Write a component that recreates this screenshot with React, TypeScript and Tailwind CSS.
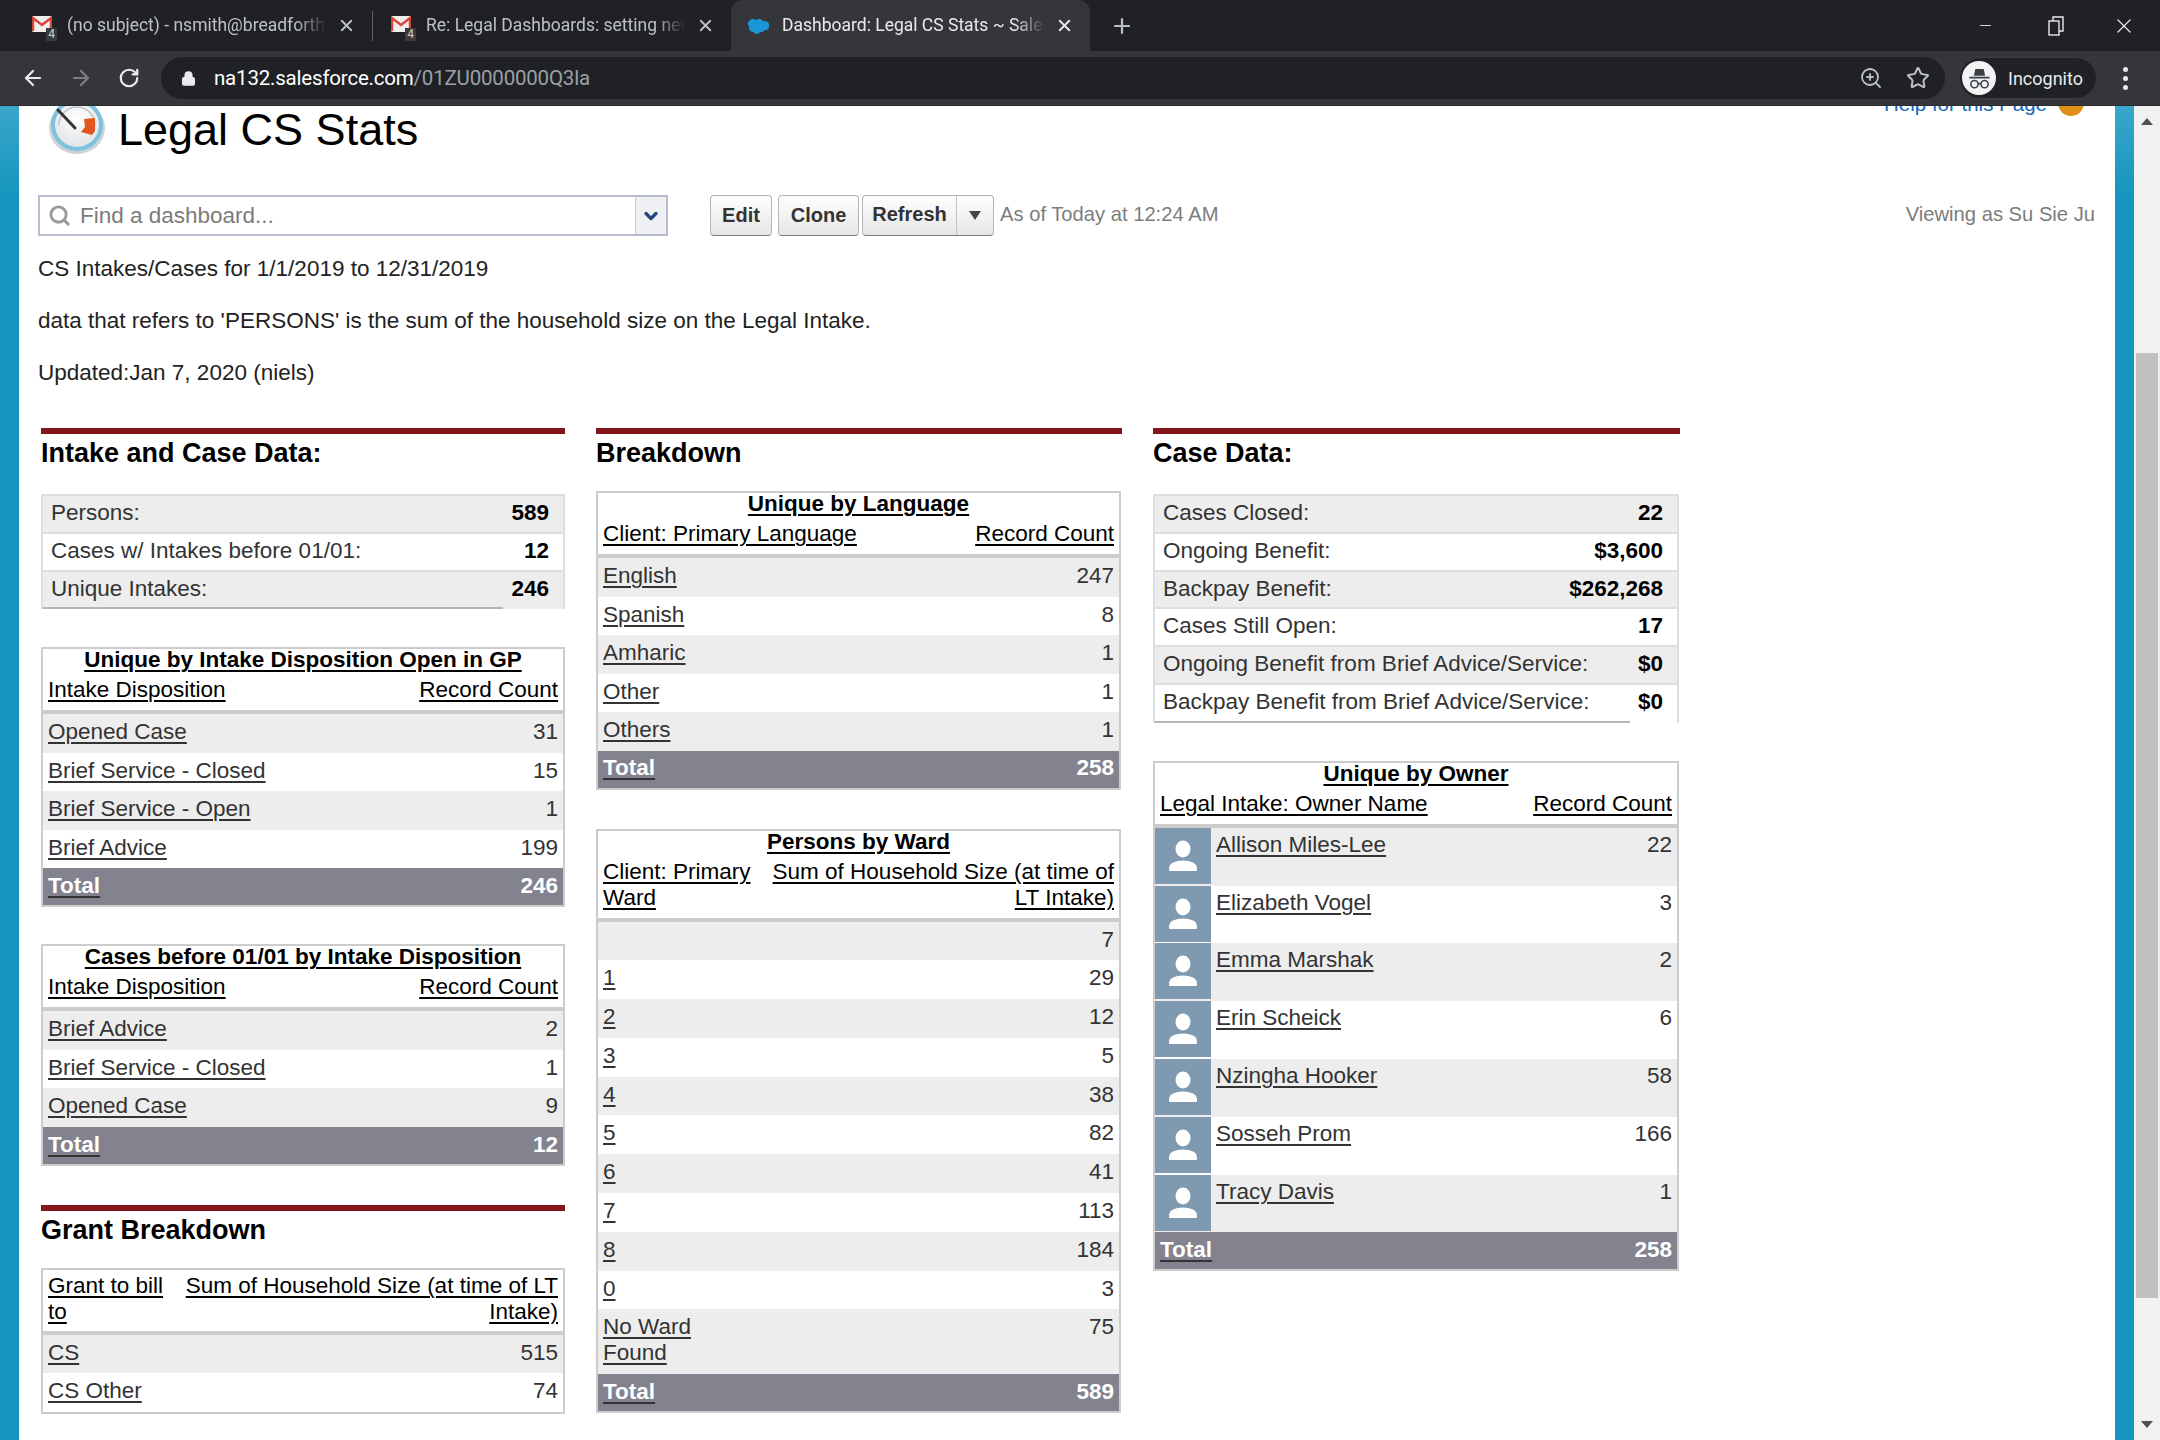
import { ArrowLeft, ArrowRight, RotateCw, Lock, ZoomIn, Star, X, Plus, Minus, Search, ChevronDown } from 'lucide-react'

type Row = { label: string; value: string; tall?: boolean }

const linkClass = 'underline decoration-2 underline-offset-[3px]'

function GmailIcon() {
  return (
    <span className="relative block w-[20px] h-[20px]">
      <svg viewBox="0 0 20 16" className="w-[20px] h-[16px]">
        <rect x="0" y="0" width="20" height="16" rx="1.5" fill="#f1efeb" />
        <path d="M1 15V2l9 7 9-7v13" fill="none" stroke="#d8443a" strokeWidth="2.4" />
      </svg>
      <span className="absolute -right-[5px] bottom-[-5px] w-[11px] h-[13px] bg-[#3b3b3b] text-[#cfcfcf] text-[12px] leading-[13px] text-center font-['Roboto',sans-serif]">4</span>
    </span>
  )
}

function CloudIcon() {
  return (
    <svg viewBox="0 0 22 18" className="w-[22px] h-[18px]">
      <path
        d="M9 3.2A4.3 4.3 0 0 1 12.2 2a4.4 4.4 0 0 1 3.9 2.3 5 5 0 0 1 2-.4 4.2 4.2 0 0 1 3.9 5 4 4 0 0 1-4.6 4.4 3.3 3.3 0 0 1-4.2 1.4 3.9 3.9 0 0 1-7 .1 3.5 3.5 0 0 1-3.7-5A3.8 3.8 0 0 1 2.700 3.400 3.900 3.900 0 0 1 9 3.200z"
        fill="#1b96d6"
      />
    </svg>
  )
}

function Tab({ icon, title, active }: { icon: React.ReactNode; title: string; active?: boolean }) {
  return (
    <div className={`relative flex items-center h-[51px] ${active ? 'w-[359px] pl-[16px] pr-[16px] bg-[#35363a] rounded-t-[12px]' : 'w-[342px] pl-[2px] pr-[16px]'}`}>
      <span className="w-[35px] shrink-0">{icon}</span>
      <span className={`flex-1 overflow-hidden whitespace-nowrap text-[17.500px] [mask-image:linear-gradient(to_right,black_88%,transparent)] ${active ? 'text-[#e8eaed]' : 'text-[#bdc1c6]'}`}>{title}</span>
      <X size={19} strokeWidth={2.4} className={`ml-[10px] shrink-0 ${active ? 'text-[#e8eaed]' : 'text-[#bdc1c6]'}`} />
    </div>
  )
}

function BrowserChrome() {
  return (
    <div className="shrink-0 font-['Roboto',sans-serif]">
      <div className="h-[51px] bg-[#202124] flex items-center">
        <div className="w-[30px]" />
        <Tab icon={<GmailIcon />} title="(no subject) - nsmith@breadforth" />
        <div className="w-px h-[30px] bg-[#5f6368]" />
        <div className="w-[16px]" />
        <Tab icon={<GmailIcon />} title="Re: Legal Dashboards: setting new" />
        <Tab active icon={<CloudIcon />} title="Dashboard: Legal CS Stats ~ Salesforce" />
        <Plus size={24} strokeWidth={2.2} className="ml-[20px] text-[#bdc1c6]" />
        <div className="flex-1" />
        <Minus size={17} strokeWidth={1.3} className="text-[#e8eaed] mr-[54px]" />
        <svg viewBox="0 0 16 20" className="w-[16px] h-[20px] mr-[48px]" fill="none" stroke="#e8eaed" strokeWidth="1.4">
          <rect x="1" y="5" width="10" height="14" />
          <path d="M5 5V1h10v14h-4" />
        </svg>
        <X size={24} strokeWidth={1.2} className="text-[#e8eaed] mr-[24px]" />
      </div>
      <div className="h-[55px] bg-[#35363a] border-b border-[#2a2b2e] flex items-center">
        <ArrowLeft size={24} strokeWidth={2.2} className="ml-[21px] text-[#e8eaed]" />
        <ArrowRight size={24} strokeWidth={2.2} className="ml-[24px] text-[#7d7f83]" />
        <RotateCw size={22} strokeWidth={2.4} className="ml-[25px] text-[#e8eaed]" />
        <div className="ml-[21px] w-[1784px] h-[42px] rounded-full bg-[#202124] flex items-center">
          <Lock size={15} strokeWidth={3} className="ml-[20px] text-[#e8eaed]" fill="#e8eaed" />
          <span className="ml-[18px] mt-[1px] text-[20.500px] text-white tracking-[-0.2px]">na132.salesforce.com<span className="text-[#9aa0a6]">/01ZU0000000Q3la</span></span>
          <div className="flex-1" />
          <ZoomIn size={24} strokeWidth={1.8} className="text-[#bdc1c6]" />
          <Star size={24} strokeWidth={2} className="ml-[23px] mr-[15px] text-[#bdc1c6]" />
        </div>
        <div className="ml-[14px] w-[138px] h-[42px] rounded-full bg-[#202124] border border-[#3c3d41] flex items-center">
          <span className="ml-[2px] w-[34px] h-[34px] rounded-full bg-[#f1f3f4] flex items-center justify-center">
            <svg viewBox="0 0 24 24" className="w-[27px] h-[27px]">
              <path d="M7 9.500L8.300 3.500H15.700L17 9.500z M3 10.500H21V12H3z" fill="#3c4043" />
              <circle cx="7.500" cy="17" r="3.200" fill="none" stroke="#3c4043" strokeWidth="1.400" />
              <circle cx="16.500" cy="17" r="3.200" fill="none" stroke="#3c4043" strokeWidth="1.400" />
              <path d="M10.700 16.500h2.600" stroke="#3c4043" strokeWidth="1.400" />
            </svg>
          </span>
          <span className="ml-[12px] text-[18px] text-[#e8eaed]">Incognito</span>
        </div>
        <div className="ml-[26px] flex flex-col gap-[4px]">
          <span className="w-[5px] h-[5px] rounded-full bg-[#e8eaed]" />
          <span className="w-[5px] h-[5px] rounded-full bg-[#e8eaed]" />
          <span className="w-[5px] h-[5px] rounded-full bg-[#e8eaed]" />
        </div>
      </div>
    </div>
  )
}

function GaugeIcon() {
  return (
    <svg viewBox="0 0 60 60" className="w-[60px] h-[60px]">
      <defs>
        <radialGradient id="face" cx="50%" cy="35%" r="70%">
          <stop offset="0%" stopColor="#ffffff" />
          <stop offset="100%" stopColor="#dfe3e6" />
        </radialGradient>
      </defs>
      <ellipse cx="29" cy="33" rx="28" ry="26" fill="#cfd2d5" />
      <circle cx="29" cy="30" r="26" fill="#7cc4dd" />
      <circle cx="29" cy="30" r="22" fill="url(#face)" />
      <path d="M11 30a18 18 0 0 1 36 0" fill="none" stroke="#c4c4c4" strokeWidth="1.500" />
      <path d="M10 15L27 33" stroke="#333" strokeWidth="3" strokeLinecap="round" />
      <path d="M36 24l11-1v13l-3 4-11-3 4-5z" fill="#e2561f" />
    </svg>
  )
}

function PageHeader() {
  return (
    <div className="-mt-[20px] h-[109px] flex items-start justify-between pr-[31px]">
      <div className="flex items-start pl-[29px]">
        <span className="mt-[9px]"><GaugeIcon /></span>
        <h1 className="ml-[10px] mt-[18px] text-[45px] leading-[52px] text-black">Legal CS Stats</h1>
      </div>
      <div className="flex items-center mt-[3px]">
        <span className="text-[20.500px] leading-[26px] mt-[2px] text-[#1468b8]">Help for this Page</span>
        <span className="ml-[11px] w-[26px] h-[26px] rounded-full bg-[#e08e17]" />
      </div>
    </div>
  )
}

function Toolbar() {
  const btn = 'h-[41px] rounded-[4px] border border-[#b5b5b5] border-b-[#7f7f7f] bg-gradient-to-b from-white to-[#e6e6e6] text-[20px] font-bold text-[#333] flex items-center justify-center'
  return (
    <div className="h-[41px] flex items-center pl-[19px] pr-[20px]">
      <div className="w-[630px] h-[41px] border-2 border-[#b7bccf] flex items-center bg-white">
        <Search size={23} strokeWidth={3} className="ml-[8px] text-[#999]" />
        <span className="ml-[9px] flex-1 text-[22.500px] text-[#7b7b7b]">Find a dashboard...</span>
        <span className="w-[31px] h-full bg-[#eef0f4] border-l border-[#c4c8d6] flex items-center justify-center">
          <ChevronDown size={20} strokeWidth={4} className="text-[#26467f]" />
        </span>
      </div>
      <button className={`${btn} ml-[42px] w-[62px]`}><span className="mb-[2px]">Edit</span></button>
      <button className={`${btn} ml-[6px] w-[81px]`}><span className="mb-[2px]">Clone</span></button>
      <div className={`${btn} ml-[3px] w-[132px] !justify-start`}>
        <span className="w-[94px] text-center h-full leading-[37px] border-r border-[#c2c2c2]">Refresh</span>
        <span className="flex-1 flex justify-center"><span className="w-0 h-0 border-x-[6px] border-x-transparent border-t-[9px] border-t-[#444]" /></span>
      </div>
      <span className="ml-[6px] mb-[2px] text-[20.200px] text-[#7c7c7c]">As of Today at 12:24 AM</span>
      <div className="flex-1" />
      <span className="mb-[2px] text-[20.200px] text-[#7c7c7c]">Viewing as Su Sie Ju</span>
    </div>
  )
}

function SectionHead({ title }: { title: string }) {
  return (
    <div>
      <div className="h-[6px] bg-[#84151a]" />
      <h2 className="text-[27px] font-bold leading-[38px] text-black">{title}</h2>
    </div>
  )
}

function Summary({ rows, valueWidth, className }: { rows: Row[]; valueWidth: string; className: string }) {
  return (
    <div className={`border-x-2 border-t-2 border-[#dcdfe1] ${className}`}>
      {rows.map((r, i) => {
        const last = i === rows.length - 1
        return (
          <div key={r.label} className={`h-[37.800px] flex text-[22.500px] leading-[34px] ${i % 2 === 0 ? 'bg-[#ededed]' : 'bg-white'}`}>
            <div className={`flex-1 pl-[8px] text-[#333] ${last ? 'border-b-2 border-[#b5b5b5]' : 'border-b-2 border-[#dcdfe1]'}`}>{r.label}</div>
            <div className={`${valueWidth} pr-[14px] text-right font-bold text-black ${last ? '' : 'border-b-2 border-[#dcdfe1]'}`}>{r.value}</div>
          </div>
        )
      })}
    </div>
  )
}

function ReportHead({ title, left, right, rightWidth }: { title?: string; left: string; right: string; rightWidth?: string }) {
  return (
    <>
      {title && (
        <div className="h-[22px] text-center text-[22.500px] leading-[22px] font-bold text-black">
          <span className={linkClass}>{title}</span>
        </div>
      )}
      <div className={`flex justify-between gap-[10px] px-[5px] text-[22.500px] leading-[26px] text-black ${title ? 'pt-[6px] pb-[7px]' : 'pt-[3px] pb-[6px]'}`}>
        <div className="min-w-0 flex-1"><span className={linkClass}>{left}</span></div>
        <div className={`text-right ${rightWidth ?? ''}`}><span className={linkClass}>{right}</span></div>
      </div>
      <div className="h-[4px] bg-[#cccccc]" />
    </>
  )
}

function TotalRow({ value }: { value: string }) {
  return (
    <div className="h-[37px] pb-[2px] bg-[#82838f] flex justify-between items-center px-[5px] text-[22.500px] font-bold text-white">
      <span className="underline decoration-2 underline-offset-[3px] decoration-[#333]">Total</span>
      <span>{value}</span>
    </div>
  )
}

function Report({ title, left, right, rightWidth, rows, total, className, rowHeight }: {
  title?: string; left: string; right: string; rightWidth?: string; rows: Row[]; total?: string; className?: string; rowHeight?: string
}) {
  return (
    <div className={`border-2 border-[#cccccc] ${className ?? ''}`}>
      <ReportHead title={title} left={left} right={right} rightWidth={rightWidth} />
      {rows.map((r, i) => (
        <div
          key={r.label + i}
          className={`flex justify-between px-[5px] pt-[5px] text-[22.500px] leading-[26px] text-[#333] ${r.tall ? 'h-[65px]' : rowHeight ?? 'h-[38.500px]'} ${i % 2 === 0 ? 'bg-[#ededed]' : 'bg-white'}`}
        >
          <span className={r.tall ? 'w-[110px]' : ''}><span className={linkClass}>{r.label}</span></span>
          <span>{r.value}</span>
        </div>
      ))}
      {total && <TotalRow value={total} />}
    </div>
  )
}

function Avatar() {
  return (
    <div className="w-[56px] h-[56px] shrink-0 bg-[#7f99b0]">
      <svg viewBox="0 0 56 56" className="w-[56px] h-[56px]">
        <ellipse cx="28" cy="21" rx="7.500" ry="8.500" fill="#fff" />
        <path d="M14 42c0-4 1-6 4-7.500 3-1.300 6-2 10-2s7 .7 10 2c3 1.500 4 3.500 4 7.500 0 .8-.5 1-1 1H15c-.5 0-1-.2-1-1z" fill="#fff" />
      </svg>
    </div>
  )
}

const owners: Row[] = [
  { label: 'Allison Miles-Lee', value: '22' },
  { label: 'Elizabeth Vogel', value: '3' },
  { label: 'Emma Marshak', value: '2' },
  { label: 'Erin Scheick', value: '6' },
  { label: 'Nzingha Hooker', value: '58' },
  { label: 'Sosseh Prom', value: '166' },
  { label: 'Tracy Davis', value: '1' },
]

function OwnerReport() {
  return (
    <div className="mt-[38px] border-2 border-[#cccccc] w-[526px]">
      <ReportHead title="Unique by Owner" left="Legal Intake: Owner Name" right="Record Count" />
      {owners.map((o, i) => (
        <div key={o.label} className={`h-[57.800px] flex ${i % 2 === 0 ? 'bg-[#ededed]' : 'bg-white'}`}>
          <Avatar />
          <div className="flex-1 flex justify-between pl-[5px] pr-[5px] pt-[4px] text-[22.500px] leading-[26px] text-[#333]">
            <span className={linkClass}>{o.label}</span>
            <span>{o.value}</span>
          </div>
        </div>
      ))}
      <TotalRow value="258" />
    </div>
  )
}

function Scrollbar() {
  return (
    <div className="w-[26px] shrink-0 bg-[#f1f1f1] flex flex-col items-center">
      <span className="mt-[12px] w-0 h-0 border-x-[6px] border-x-transparent border-b-[7px] border-b-[#505050]" />
      <div className="mt-[228px] w-[22px] h-[945px] bg-[#c1c1c1]" />
      <div className="flex-1" />
      <span className="mb-[12px] w-0 h-0 border-x-[6px] border-x-transparent border-t-[7px] border-t-[#505050]" />
    </div>
  )
}

export default function App() {
  const stripe = 'w-[19px] shrink-0 bg-[linear-gradient(to_bottom,#3aa6cb_0px,#1595bd_90px,#1595bd_100%)]'
  return (
    <div className="w-[2160px] h-[1440px] overflow-hidden flex flex-col font-['Liberation_Sans',Arial,sans-serif]">
      <BrowserChrome />
      <div className="flex flex-1 min-h-0">
        <div className={stripe} />
        <main className="flex-1 min-w-0 bg-white overflow-hidden">
          <PageHeader />
          <Toolbar />
          <div className="mt-[7px] pl-[19px] text-[22.500px] leading-[52px] text-[#222]">
            <p>CS Intakes/Cases for 1/1/2019 to 12/31/2019</p>
            <p>data that refers to 'PERSONS' is the sum of the household size on the Legal Intake.</p>
            <p>Updated:Jan 7, 2020 (niels)</p>
          </div>

          <div className="mt-[29px] pl-[22px] flex items-start">
            {/* left column */}
            <div className="w-[524px] shrink-0">
              <SectionHead title="Intake and Case Data:" />
              <Summary
                className="mt-[22px]"
                valueWidth="w-[60px]"
                rows={[
                  { label: 'Persons:', value: '589' },
                  { label: 'Cases w/ Intakes before 01/01:', value: '12' },
                  { label: 'Unique Intakes:', value: '246' },
                ]}
              />
              <Report
                className="mt-[38px]"
                title="Unique by Intake Disposition Open in GP"
                left="Intake Disposition"
                right="Record Count"
                total="246"
                rows={[
                  { label: 'Opened Case', value: '31' },
                  { label: 'Brief Service - Closed', value: '15' },
                  { label: 'Brief Service - Open', value: '1' },
                  { label: 'Brief Advice', value: '199' },
                ]}
              />
              <Report
                className="mt-[37px]"
                title="Cases before 01/01 by Intake Disposition"
                left="Intake Disposition"
                right="Record Count"
                total="12"
                rows={[
                  { label: 'Brief Advice', value: '2' },
                  { label: 'Brief Service - Closed', value: '1' },
                  { label: 'Opened Case', value: '9' },
                ]}
              />
              <div className="mt-[39px]"><SectionHead title="Grant Breakdown" /></div>
              <Report
                className="mt-[19px]"
                left="Grant to bill to"
                right="Sum of Household Size (at time of LT Intake)"
                rightWidth="w-[375px]"
                rows={[
                  { label: 'CS', value: '515' },
                  { label: 'CS Other', value: '74' },
                ]}
              />
            </div>

            {/* middle column */}
            <div className="ml-[31px] w-[526px] shrink-0">
              <SectionHead title="Breakdown" />
              <Report
                className="mt-[19px] mr-[1px]"
                title="Unique by Language"
                left="Client: Primary Language"
                right="Record Count"
                total="258"
                rows={[
                  { label: 'English', value: '247' },
                  { label: 'Spanish', value: '8' },
                  { label: 'Amharic', value: '1' },
                  { label: 'Other', value: '1' },
                  { label: 'Others', value: '1' },
                ]}
              />
              <Report
                className="mt-[39px] mr-[1px]"
                title="Persons by Ward"
                left="Client: Primary Ward"
                right="Sum of Household Size (at time of LT Intake)"
                rightWidth="w-[345px]"
                rowHeight="h-[38.800px]"
                total="589"
                rows={[
                  { label: '', value: '7' },
                  { label: '1', value: '29' },
                  { label: '2', value: '12' },
                  { label: '3', value: '5' },
                  { label: '4', value: '38' },
                  { label: '5', value: '82' },
                  { label: '6', value: '41' },
                  { label: '7', value: '113' },
                  { label: '8', value: '184' },
                  { label: '0', value: '3' },
                  { label: 'No Ward Found', value: '75', tall: true },
                ]}
              />
            </div>

            {/* right column */}
            <div className="ml-[31px] w-[527px] shrink-0">
              <SectionHead title="Case Data:" />
              <Summary
                className="mt-[22px] mr-[1px]"
                valueWidth="w-[47px] min-w-fit"
                rows={[
                  { label: 'Cases Closed:', value: '22' },
                  { label: 'Ongoing Benefit:', value: '$3,600' },
                  { label: 'Backpay Benefit:', value: '$262,268' },
                  { label: 'Cases Still Open:', value: '17' },
                  { label: 'Ongoing Benefit from Brief Advice/Service:', value: '$0' },
                  { label: 'Backpay Benefit from Brief Advice/Service:', value: '$0' },
                ]}
              />
              <OwnerReport />
            </div>
          </div>
        </main>
        <div className={stripe} />
        <Scrollbar />
      </div>
    </div>
  )
}
